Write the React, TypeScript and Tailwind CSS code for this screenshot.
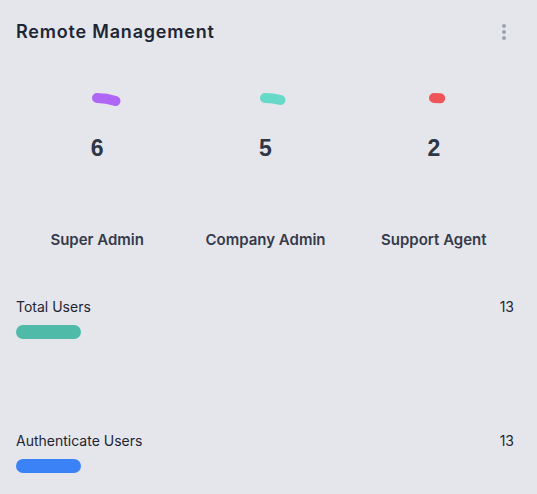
import React from 'react'

type Role = {label: string; value: number; color: string; angle: number}

const roles: Role[] = [
  {label: 'Super Admin', value: 6, color: '#b066f5', angle: 18},
  {label: 'Company Admin', value: 5, color: '#66d9c8', angle: 15},
  {label: 'Support Agent', value: 2, color: '#ef5558', angle: 6},
]

const stats = [
  {label: 'Total Users', value: 13, color: 'bg-[#4fbaa8]'},
  {label: 'Authenticate Users', value: 13, color: 'bg-[#3b82f6]'},
]

// small slice of a radial gauge, starts at 12 o'clock and runs clockwise
const Arc = ({color, angle}: {color: string; angle: number}) => {
  const r = 60
  const cx = 60
  const cy = 68
  const rad = (angle * Math.PI) / 180
  const ex = cx + r * Math.sin(rad)
  const ey = cy - r * Math.cos(rad)
  return (
    <svg width="120" height="20" viewBox="0 0 120 20" className="overflow-visible">
      <path
        d={`M ${cx} ${cy - r} A ${r} ${r} 0 0 1 ${ex.toFixed(2)} ${ey.toFixed(2)}`}
        fill="none"
        stroke={color}
        strokeWidth={10}
        strokeLinecap="round"
      />
    </svg>
  )
}

export default function App() {
  return (
    <div className="min-h-screen w-full bg-[#e5e6ec] px-4 font-['Inter',sans-serif] text-[#1f2937]">
      <div className="flex items-center justify-between pt-[20px]">
        <h2 className="text-[18px] font-semibold leading-[24px] tracking-[0.8px] text-[#1e2636]">Remote Management</h2>
        <button className="mr-[9px] flex w-4 flex-col items-center gap-[2px]">
          <span className="h-1 w-1 rounded-full bg-[#9ca3af]" />
          <span className="h-1 w-1 rounded-full bg-[#9ca3af]" />
          <span className="h-1 w-1 rounded-full bg-[#9ca3af]" />
        </button>
      </div>

      <div className="ml-[-3px] mr-[3px] mt-[46px] grid grid-cols-3">
        {roles.map(r => (
          <div key={r.label} className="flex flex-col items-center">
            <Arc color={r.color} angle={r.angle} />
            <div className="mt-[24px] font-['Liberation_Sans',sans-serif] text-[23px] font-bold leading-[28px] text-[#2f3747]">
              {r.value}
            </div>
          </div>
        ))}
      </div>

      <div className="ml-[-3px] mr-[3px] mt-[68px] grid grid-cols-3">
        {roles.map(r => (
          <div key={r.label} className="text-center text-[15px] font-semibold leading-[20px] text-[#353a4a]">
            {r.label}
          </div>
        ))}
      </div>

      <div className="mt-[47px] flex flex-col gap-[92px]">
        {stats.map(s => (
          <div key={s.label}>
            <div className="flex items-center justify-between text-[14px] leading-[20px] text-[#1f2433]">
              <span>{s.label}</span>
              <span className="pr-[7px]">{s.value}</span>
            </div>
            <div className={`mt-[8px] h-[14px] w-[65px] rounded-full ${s.color}`} />
          </div>
        ))}
      </div>
    </div>
  )
}
